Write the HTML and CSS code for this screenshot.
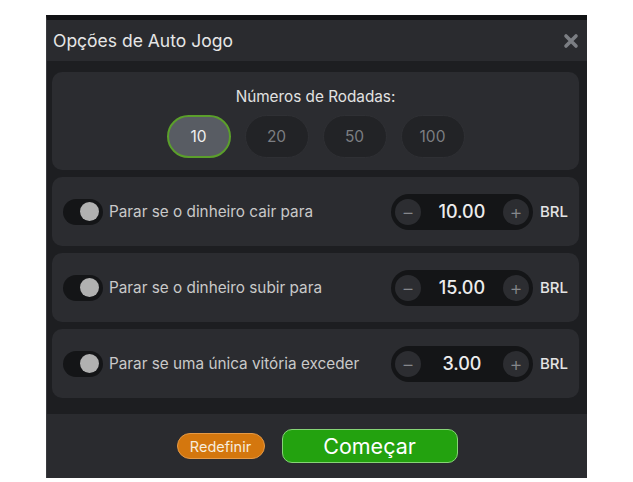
FILE: index.html
```html
<!DOCTYPE html>
<html lang="pt">
<head>
    <meta charset="utf-8">
    <link rel="stylesheet" href="styles.css">
</head>
<body>
    <div class="dialog">
        <div class="dialog-header">
            <span class="dialog-title">Opções de Auto Jogo</span>
            <svg class="close" width="16" height="16" viewBox="0 0 16 16">
                <path d="M3 3 L13 13 M13 3 L3 13" stroke="#7b7e83" stroke-width="3.6" stroke-linecap="round"/>
            </svg>
        </div>
        <div class="dialog-body">
            <div class="card rounds">
                <div class="rounds-title">Números de Rodadas:</div>
                <div class="rounds-list">
                    <button class="round active">10</button>
                    <button class="round">20</button>
                    <button class="round">50</button>
                    <button class="round">100</button>
                </div>
            </div>
            <div class="card row">
                <div class="toggle"><div class="knob"></div></div>
                <span class="row-label">Parar se o dinheiro cair para</span>
                <div class="stepper">
                    <span class="step">&minus;</span>
                    <span class="value">10.00</span>
                    <span class="step">+</span>
                </div>
                <span class="currency">BRL</span>
            </div>
            <div class="card row">
                <div class="toggle"><div class="knob"></div></div>
                <span class="row-label">Parar se o dinheiro subir para</span>
                <div class="stepper">
                    <span class="step">&minus;</span>
                    <span class="value">15.00</span>
                    <span class="step">+</span>
                </div>
                <span class="currency">BRL</span>
            </div>
            <div class="card row">
                <div class="toggle"><div class="knob"></div></div>
                <span class="row-label">Parar se uma única vitória exceder</span>
                <div class="stepper">
                    <span class="step">&minus;</span>
                    <span class="value">3.00</span>
                    <span class="step">+</span>
                </div>
                <span class="currency">BRL</span>
            </div>
        </div>
        <div class="dialog-footer">
            <button class="btn-reset">Redefinir</button>
            <button class="btn-start">Começar</button>
        </div>
    </div>
</body>
</html>
```

FILE: styles.css
```css
body {
    margin: 0;
    background-color: #fff;
    font-family: Inter, "Noto Sans", sans-serif;
}
.dialog {
    width: 541px;
    margin: 15px auto 0;
    border-top: 5px solid #111214;
    box-sizing: border-box;
    border-left: 1px solid #3a3b3f;
}
.dialog-header {
    height: 41px;
    background-color: #2a2b2f;
    display: flex;
    align-items: center;
    justify-content: space-between;
    padding: 0 8px 0 6px;
}
.dialog-title {
    font-size: 17.5px;
    color: #e6e6e6;
}
.close {
    display: block;
}
.dialog-body {
    background-color: #1d1e21;
    padding: 11px 8px 16px 5px;
    display: flex;
    flex-direction: column;
    gap: 7px;
}
.card {
    background-color: #2b2c30;
    border-radius: 10px;
}
.rounds {
    height: 98px;
    box-sizing: border-box;
    padding-top: 15px;
    display: flex;
    flex-direction: column;
    align-items: center;
    gap: 8px;
}
.rounds-title {
    font-size: 15.3px;
    line-height: 20px;
    color: #e2e2e2;
}
.rounds-list {
    display: flex;
    gap: 14px;
}
.round {
    width: 64px;
    height: 43px;
    border-radius: 22px;
    border: 1px solid #2f3034;
    background-color: #222326;
    color: #7c7e82;
    font-family: inherit;
    font-size: 15.5px;
    padding: 0;
}
.round.active {
    border: 2px solid #5b9f2b;
    background-color: #585c63;
    color: #f0f0f0;
}
.row {
    height: 69px;
    display: flex;
    align-items: center;
    padding: 0 11px 0 11px;
}
.toggle {
    width: 40px;
    height: 26px;
    border-radius: 13px;
    background-color: #141517;
    position: relative;
    flex-shrink: 0;
}
.knob {
    position: absolute;
    right: 4px;
    top: 3.5px;
    width: 19px;
    height: 19px;
    border-radius: 50%;
    background-color: #b1b1b1;
}
.row-label {
    margin-left: 6px;
    font-size: 15.3px;
    color: #c9c9c9;
}
.stepper {
    margin-left: auto;
    width: 142px;
    height: 36px;
    box-sizing: border-box;
    padding: 0 4px;
    border-radius: 18px;
    background-color: #141517;
    display: flex;
    align-items: center;
    justify-content: space-between;
}
.step {
    width: 26px;
    height: 26px;
    border-radius: 50%;
    background-color: #2c2d31;
    color: #85878b;
    font-size: 20px;
    font-weight: 300;
    line-height: 26px;
    text-align: center;
}
.value {
    font-size: 18px;
    font-weight: 500;
    color: #ececec;
}
.currency {
    margin-left: 7px;
    font-size: 15px;
    font-weight: 500;
    color: #e4e4e4;
}
.dialog-footer {
    height: 64px;
    background-color: #2a2b2f;
    display: flex;
    align-items: center;
    justify-content: center;
    gap: 17px;
}
.btn-reset {
    width: 88px;
    height: 26px;
    border-radius: 13px;
    border: 1px solid #e69a45;
    background-color: #d4770e;
    color: #f7ecdc;
    font-family: inherit;
    font-size: 14.5px;
    padding: 0;
}
.btn-start {
    width: 176px;
    height: 34px;
    border-radius: 10px;
    border: 1px solid #86d477;
    background-color: #23a20f;
    color: #fff;
    font-family: inherit;
    font-size: 21.5px;
    padding: 0;
}
```
